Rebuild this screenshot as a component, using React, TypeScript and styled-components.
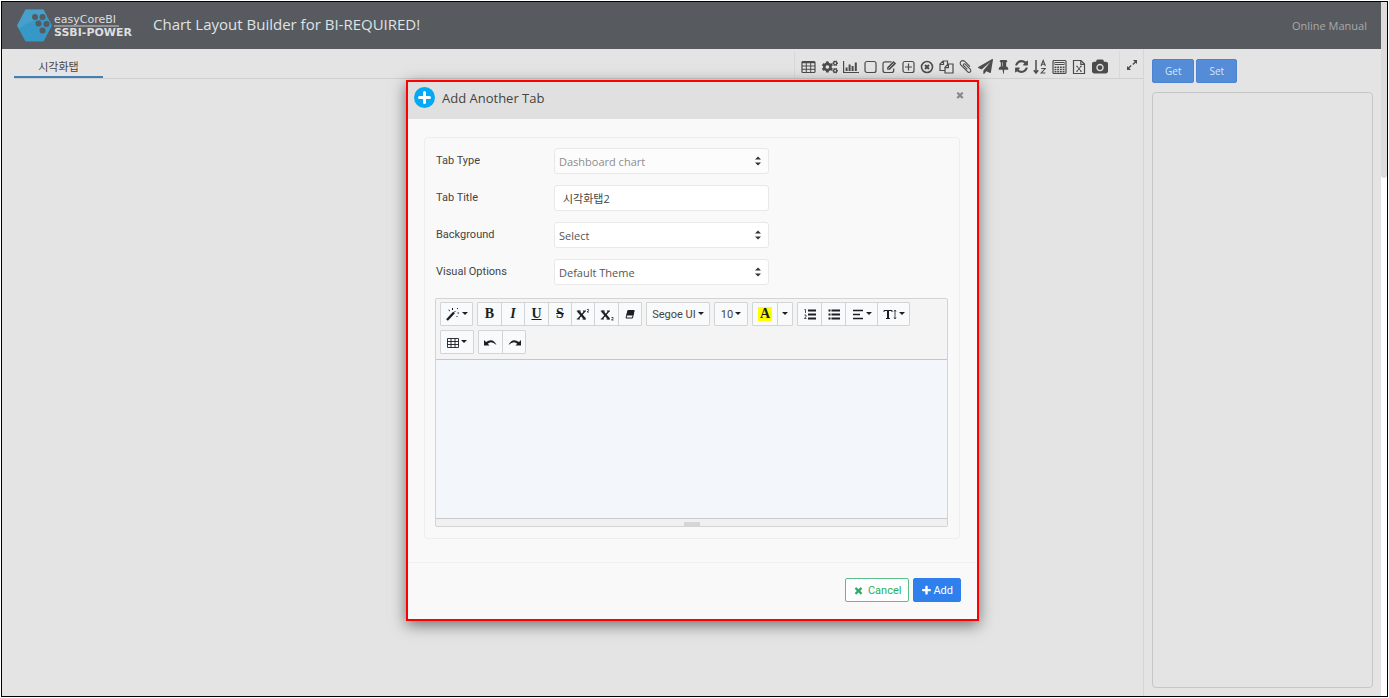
import React from "react";
import styled, { createGlobalStyle } from "styled-components";
import { FaCogs } from "react-icons/fa";

const GlobalStyle = createGlobalStyle`
  *, *::before, *::after { box-sizing: border-box; }
  body {
    margin: 0;
    background: #fff;
    color: #444;
    font-family: "Open Sans", "Noto Sans CJK KR", sans-serif;
    font-size: 11px;
  }
  button, input, select { font: inherit; color: inherit; }
  button { cursor: pointer; }
`;

const Frame = styled.div`
  display: flex;
  position: relative;
  height: calc(100vh - 2px);
  margin: 1px;
  margin-bottom: 0;
  border: 1px solid #000;
`;

const Page = styled.div`
  position: relative;
  flex: 1;
  display: flex;
  flex-direction: column;
  background: #e4e4e4;
`;

const ScrollTrack = styled.div`
  width: 6px;
  background: #fff;
`;

const ScrollThumb = styled.div`
  height: 176px;
  border-radius: 0 0 3px 3px;
  background: #dcdcdc;
`;

const Header = styled.header`
  display: flex;
  align-items: center;
  height: 47px;
  padding: 0 14px;
  background: #575a5e;
`;

const Brand = styled.a`
  display: flex;
  align-items: center;
  gap: 1px;
  width: 137px;
  color: #dedede;
  text-decoration: none;
`;

const BrandText = styled.span`
  display: flex;
  flex-direction: column;
  align-items: flex-start;
  font-family: "DejaVu Sans", sans-serif;
  font-size: 11px;
  line-height: 11px;
  white-space: nowrap;
`;

const BrandTop = styled.span`
  padding-right: 3px;
  border-bottom: 2px solid #919396;
`;

const BrandBottom = styled.span`
  font-weight: 700;
`;

const AppTitle = styled.h1`
  flex: 1;
  margin: 0;
  padding-bottom: 4px;
  color: #dfe3e6;
  font-size: 15px;
  font-weight: 400;
  line-height: 20px;
`;

const ManualLink = styled.a`
  color: #a9a9aa;
  line-height: 16px;
  text-decoration: none;
`;

const Main = styled.div`
  flex: 1;
  display: flex;
`;

const Workspace = styled.main`
  flex: 1;
  border-right: 1px solid #d6d6d6;
`;

const TabBar = styled.div`
  display: flex;
  justify-content: space-between;
  height: 30px;
  margin-left: 12px;
  border-bottom: 1px solid #cfcfcf;
`;

const TabButton = styled.button`
  width: 89px;
  height: 29px;
  padding: 8px 0 0;
  border: 0;
  border-bottom: 2px solid #4380b4;
  background: none;
  line-height: 16px;
`;

const Tools = styled.div`
  display: flex;
  align-items: center;
  gap: 5px;
  margin-top: 2px;
  padding-left: 6px;
  padding-top: 4px;
  border-left: 1px solid #d9d9d9;
  color: #4c4c4c;
`;

const ToolButton = styled.button<{ $w: number }>`
  display: flex;
  justify-content: center;
  width: ${(p) => p.$w}px;
  padding: 0;
  border: 0;
  background: none;
  svg { flex: none; display: block; }
`;

const ExpandBox = styled.div`
  display: flex;
  align-items: center;
  align-self: stretch;
  margin: -4px 0 0 6px;
  padding: 0 5px 0 6px;
  border-left: 1px solid #d9d9d9;
`;

const Side = styled.aside`
  display: flex;
  flex-direction: column;
  gap: 9px;
  width: 237px;
  padding: 10px 8px 8px;
`;

const SideActions = styled.div`
  display: flex;
  gap: 2px;
`;

const SideButton = styled.button`
  height: 24px;
  padding: 0 12px;
  border: 1px solid #4b84cf;
  border-radius: 2px;
  background: #548cd8;
  color: #d8e6f5;
  font-size: 10px;
`;

const Output = styled.div`
  flex: 1;
  border: 1px solid #c6c6c6;
  border-radius: 4px;
`;

const Overlay = styled.div`
  position: absolute;
  inset: 0;
  display: flex;
  justify-content: center;
  align-items: flex-start;
  padding-top: 78px;
`;

const Dialog = styled.section`
  width: 573px;
  margin-left: 2px;
  border: 2px solid #f00;
  background: #f9f9f9;
  box-shadow: 0 4px 14px rgba(0, 0, 0, 0.5);
`;

const DialogHeader = styled.header`
  display: flex;
  align-items: center;
  gap: 7px;
  height: 37px;
  padding: 0 12px 6px 6px;
  background: #e0e0e0;
`;

const DialogTitle = styled.h2`
  flex: 1;
  margin: 0;
  font-size: 13px;
  font-weight: 400;
  line-height: 20px;
`;

const CloseButton = styled.button`
  display: flex;
  padding: 0 0 6px;
  border: 0;
  background: none;
  color: #888;
`;

const Panel = styled.div`
  margin: 18px 17px 0 16px;
  padding: 10px 11px 11px 10px;
  border: 1px solid #ededed;
  border-radius: 4px;
`;

const Fields = styled.div`
  display: flex;
  flex-direction: column;
  gap: 11px;
  padding-left: 1px;
`;

const FieldRow = styled.div`
  display: grid;
  grid-template-columns: 118px 215px;
  align-items: center;
`;

const FieldLabel = styled.label`
  padding-bottom: 1px;
  font-family: Roboto, "Liberation Sans", sans-serif;
  font-size: 11px;
  line-height: 14px;
`;

const SelectWrap = styled.div`
  position: relative;
`;

const FieldSelect = styled.select`
  display: block;
  width: 100%;
  height: 26px;
  padding: 0 4px;
  appearance: none;
  border: 1px solid #e8e8e8;
  border-radius: 3px;
  background: #fff;
  color: #555;
  &:disabled { background: #fcfcfc; color: #8d8d8d; opacity: 1; }
`;

const SelectArrows = styled.svg`
  position: absolute;
  right: 8px;
  top: 8px;
  pointer-events: none;
`;

const FieldInput = styled.input`
  width: 100%;
  height: 26px;
  padding: 0 8px;
  border: 1px solid #e8e8e8;
  border-radius: 3px;
  background: #fff;
`;

const Editor = styled.div`
  margin-top: 13px;
  border: 1px solid #d3d3d3;
  border-radius: 2px;
`;

const EditorTools = styled.div`
  display: flex;
  flex-wrap: wrap;
  gap: 4px;
  padding: 3px 4px 5px;
  background: #f4f4f4;
  border-bottom: 1px solid #c6c6c6;
`;

const Group = styled.div`
  display: flex;
  height: 24px;
  border: 1px solid #d2d4d6;
  border-radius: 1px;
  background: #f8fafc;
`;

const EditButton = styled.button<{ $w: number }>`
  display: flex;
  align-items: center;
  justify-content: center;
  gap: 2px;
  width: ${(p) => p.$w}px;
  padding: 0;
  border: 0;
  background: none;
  color: #1c1f22;
  & + & { border-left: 1px solid #d2d4d6; }
`;

const FontText = styled.span`
  color: #444;
  font-family: Roboto, sans-serif;
  font-size: 11px;
`;

const Glyph = styled.span<{ $kind?: "italic" | "underline" | "strike" | "mark" }>`
  padding: 0 2px;
  font-family: "Liberation Serif", serif;
  font-size: 14px;
  font-weight: 700;
  line-height: 14px;
  font-style: ${(p) => (p.$kind === "italic" ? "italic" : "normal")};
  text-decoration: ${(p) =>
    p.$kind === "underline" ? "underline" : p.$kind === "strike" ? "line-through" : "none"};
  background: ${(p) => (p.$kind === "mark" ? "#ff0" : "none")};
`;

const EditArea = styled.div`
  height: 158px;
  background: #f3f7fc;
  outline: none;
`;

const StatusBar = styled.div`
  display: flex;
  justify-content: center;
  align-items: flex-end;
  height: 8px;
  border-top: 1px solid #c9c9c9;
  background: #f0f0f0;
`;

const Grip = styled.div`
  width: 16px;
  height: 4px;
  background: #d6d6d6;
`;

const DialogFooter = styled.footer`
  display: flex;
  justify-content: flex-end;
  gap: 4px;
  margin-top: 23px;
  padding: 15px 16px 17px;
  border-top: 1px solid #f0f0f0;
`;

const FooterButton = styled.button<{ $primary?: boolean }>`
  display: flex;
  align-items: center;
  justify-content: center;
  gap: ${(p) => (p.$primary ? 1 : 4)}px;
  height: 24px;
  padding: 0 7px;
  border: 1px solid ${(p) => (p.$primary ? "#2f80ed" : "#5cbf85")};
  border-radius: 2px;
  background: ${(p) => (p.$primary ? "#2f80ed" : "#fff")};
  color: ${(p) => (p.$primary ? "#fff" : "#27ae60")};
  font-family: Roboto, "Liberation Sans", sans-serif;
  font-size: 11px;
`;

const PLUS =
  "M1600 736v192q0 40-28 68t-68 28h-416v416q0 40-28 68t-68 28h-192q-40 0-68-28t-28-68v-416h-416q-40 0-68-28t-28-68v-192q0-40 28-68t68-28h416v-416q0-40 28-68t68-28h192q40 0 68 28t28 68v416h416q40 0 68 28t28 68z";
const TIMES =
  "M1490 1322q0 40-28 68l-136 136q-28 28-68 28t-68-28l-294-294-294 294q-28 28-68 28t-68-28l-136-136q-28-28-28-68t28-68l294-294-294-294q-28-28-28-68t28-68l136-136q28-28 68-28t68 28l294 294 294-294q28-28 68-28t68 28l136 136q28 28 28 68t-28 68l-294 294 294 294q28 28 28 68z";
const CLIP =
  "M1596 1385q0 117-79 196t-196 79q-135 0-235-100l-777-776q-113-115-113-271 0-159 110-270t269-111q158 0 273 113l605 606q10 10 10 22 0 16-30.5 46.5t-46.5 30.5q-13 0-23-10l-606-607q-79-77-181-77-106 0-179 75t-73 181q0 105 76 181l776 777q63 63 145 63 64 0 106-42t42-106q0-82-63-145l-581-581q-26-24-60-24-29 0-48 19t-19 48q0 32 25 59l410 410q10 10 10 22 0 16-31 47t-47 31q-12 0-22-10l-410-410q-63-61-63-149 0-82 57-139t139-57q88 0 149 63l581 581q100 98 100 235z";
const PLANE =
  "M1764 11q33 24 27 64l-256 1536q-5 29-32 45-14 8-31 8-11 0-24-5l-453-185-242 295q-18 23-49 23-13 0-22-4-19-7-30.5-23.5t-11.5-36.5v-349l864-1059-1069 925-395-162q-37-14-40-55-2-40 32-59l1664-960q15-9 32-9 20 0 36 11z";
const PIN =
  "M800 864v-448q0-14-9-23t-23-9-23 9-9 23v448q0 14 9 23t23 9 23-9 9-23zm672 352q0 26-19 45t-45 19h-429l-51 483q-2 12-10.5 20.5t-20.5 8.5h-1q-27 0-32-27l-76-485h-404q-26 0-45-19t-19-45q0-123 78.5-221.5t177.5-98.5v-512q-52 0-90-38t-38-90 38-90 90-38h640q52 0 90 38t38 90-38 90-90 38v512q99 0 177.5 98.5t78.5 221.5z";
const REFRESH =
  "M1639 1056q0 5-1 7-64 268-268 434.5t-478 166.5q-146 0-282.5-55t-243.5-157l-129 129q-19 19-45 19t-45-19-19-45v-448q0-26 19-45t45-19h448q26 0 45 19t19 45-19 45l-137 137q71 66 161 102t187 36q134 0 250-65t186-179q11-17 53-117 8-23 30-23h192q13 0 22.5 9.5t9.5 22.5zm25-800v448q0 26-19 45t-45 19h-448q-26 0-45-19t-19-45 19-45l138-138q-148-137-349-137-134 0-250 65t-186 179q-11 17-53 117-8 23-30 23h-199q-13 0-22.5-9.5t-9.5-22.5v-7q65-268 270-434.5t480-166.5q146 0 284 55.5t245 156.5l130-129q19-19 45-19t45 19 19 45z";
const CAMERA =
  "M896 672q119 0 203.5 84.5t84.5 203.5-84.5 203.5-203.5 84.5-203.5-84.5-84.5-203.5 84.5-203.5 203.5-84.5zm704-416q106 0 181 75t75 181v896q0 106-75 181t-181 75h-1408q-106 0-181-75t-75-181v-896q0-106 75-181t181-75h224l51-136q19-49 69.5-84.5t103.5-35.5h512q53 0 103.5 35.5t69.5 84.5l51 136h224zm-704 1152q185 0 316.5-131.5t131.5-316.5-131.5-316.5-316.5-131.5-316.5 131.5-131.5 316.5 131.5 316.5 316.5 131.5z";

function Solid({ d, size, box = "0 0 1792 1792" }: { d: string; size: number; box?: string }) {
  return (
    <svg width={size} height={size} viewBox={box} fill="currentColor" aria-hidden="true">
      <path d={d} />
    </svg>
  );
}

function Line({ children, w = 16 }: { children: React.ReactNode; w?: number }) {
  return (
    <svg
      width={w}
      height={16}
      viewBox={`0 0 ${w} 16`}
      fill="none"
      stroke="currentColor"
      strokeWidth={1.2}
      aria-hidden="true"
    >
      {children}
    </svg>
  );
}

function Caret() {
  return (
    <svg width="6" height="6" viewBox="0 0 6 6" fill="currentColor" aria-hidden="true">
      <path d="M0 1h6L3 4z" />
    </svg>
  );
}

const tools: { label: string; w: number; icon: React.ReactNode }[] = [
  {
    label: "Table",
    w: 15,
    icon: (
      <Line w={15}>
        <rect x="1" y="2.5" width="13" height="11" rx="1" />
        <path d="M1 3.500h13" strokeWidth="1.500" />
        <path d="M1 7h13M1 10.300h13M5.300 3v10.500M9.700 3v10.500" strokeWidth="1" />
      </Line>
    ),
  },
  { label: "Settings", w: 17, icon: <FaCogs size={16} /> },
  {
    label: "Chart",
    w: 16,
    icon: (
      <Line w={16}>
        <path d="M.6 2v11.5H16" />
        <path d="M3.6 8.5V12M6.6 5.5V12M9.6 7V12M12.8 3.5V12" strokeWidth="2" />
      </Line>
    ),
  },
  {
    label: "Shape",
    w: 13,
    icon: (
      <Line w={13}>
        <rect x="1" y="2.5" width="11" height="11" rx="2" />
      </Line>
    ),
  },
  {
    label: "Edit",
    w: 15,
    icon: (
      <Line w={15}>
        <path d="M9.5 2.8H3a2 2 0 0 0-2 2v6.7a2 2 0 0 0 2 2h6.7a2 2 0 0 0 2-2V9.5" />
        <path d="M5.2 10.8V8.2l6.2-6.2 2.8 2.6-6.3 6.2z" fill="currentColor" stroke="none" />
        <path d="M6.3 9.7 11.8 4.2" stroke="#e4e4e4" strokeWidth=".7" />
      </Line>
    ),
  },
  {
    label: "Add panel",
    w: 13,
    icon: (
      <Line w={13}>
        <rect x="1" y="2.5" width="11" height="11" rx="2" />
        <path d="M6.5 4.5v7M3 8h7" />
      </Line>
    ),
  },
  {
    label: "Remove",
    w: 14,
    icon: (
      <Line w={14}>
        <circle cx="7" cy="8" r="5.5" strokeWidth="1.6" />
        <path d="m5 6 4 4M9 6l-4 4" strokeWidth="2" />
      </Line>
    ),
  },
  {
    label: "Copy",
    w: 15,
    icon: (
      <Line w={15}>
        <path d="M6 11.5H1V5l3-3h4.5v3M1 5.5h3.5V2" />
        <path d="M6 8.2 9 5h5v9H6zM6 8.6h3.4V5" />
      </Line>
    ),
  },
  { label: "Attach", w: 13, icon: <Solid d={CLIP} size={15} box="0 0 1792 1792" /> },
  { label: "Send", w: 16, icon: <Solid d={PLANE} size={15} /> },
  { label: "Pin", w: 11, icon: <Solid d={PIN} size={15} /> },
  { label: "Refresh", w: 14, icon: <Solid d={REFRESH} size={15} /> },
  {
    label: "Sort",
    w: 14,
    icon: (
      <Line w={14}>
        <path d="M3 1v12M.8 11.300 3 14l2.200-2.700" strokeWidth="1.500" />
        <path d="M8 7l2.200-5.500L12.400 7M8.800 5.200h2.800M8.200 9.500h4L8.200 14h4.200" strokeWidth="1.100" />
      </Line>
    ),
  },
  {
    label: "Calculator",
    w: 15,
    icon: (
      <Line w={15}>
        <rect x="1" y="1.500" width="13" height="13" rx="1" />
        <rect x="3" y="3.500" width="9" height="2" strokeWidth="1" />
        <path d="M2.500 8.200h10M2.500 10.500h10M2.500 12.800h10" strokeWidth="1.500" strokeDasharray="1.900 .8" />
      </Line>
    ),
  },
  {
    label: "Export to spreadsheet",
    w: 14,
    icon: (
      <Line w={14}>
        <path d="M1.500 1.500H9L12.500 5v9.500h-11zM8.800 1.500v3.800h3.700" />
        <path d="m5 7.300 4 4.900M9 7.300l-4 4.900M4.200 7.300h1.600M8 7.300h1.800M4.200 12.200h1.600M8 12.200h1.800" strokeWidth="1" />
      </Line>
    ),
  },
  { label: "Capture", w: 17, icon: <Solid d={CAMERA} size={16} box="-64 -64 1920 1920" /> },
];

function Logo() {
  return (
    <svg width="37" height="33" viewBox="0 0 37 33" aria-hidden="true">
      <path d="M9.500 .5h18L36 16.500l-8.500 16h-18L1 16.500z" fill="#3598c6" />
      <path d="M9.500 .5h18l3.500 7Q12 12 3 20L1 16.500z" fill="#53a8cf" opacity=".55" />
      <g fill="#575a5e">
        <circle cx="19" cy="8" r="3" />
        <circle cx="26.500" cy="8" r="3" />
        <circle cx="22.500" cy="14.500" r="3" />
        <circle cx="30.500" cy="15" r="3" />
        <circle cx="26.500" cy="21.500" r="3" />
      </g>
    </svg>
  );
}

function Field({
  id,
  label,
  children,
}: {
  id: string;
  label: string;
  children: React.ReactNode;
}) {
  return (
    <FieldRow>
      <FieldLabel htmlFor={id}>{label}</FieldLabel>
      {children}
    </FieldRow>
  );
}

function Picker({ id, value, disabled }: { id: string; value: string; disabled?: boolean }) {
  return (
    <SelectWrap>
      <FieldSelect id={id} disabled={disabled}>
        <option>{value}</option>
      </FieldSelect>
      <SelectArrows width="6" height="10" viewBox="0 0 6 10" fill="#333">
        <path d="M0 3.500 3 .5l3 3zM0 6.500h6l-3 3z" />
      </SelectArrows>
    </SelectWrap>
  );
}

function EditorToolbar() {
  return (
    <EditorTools>
      <Group>
        <EditButton $w={31} aria-label="Style">
          <svg width="14" height="14" viewBox="0 0 14 14" stroke="currentColor" fill="none">
            <path d="M1 13 8 5.500" strokeWidth="2.400" />
            <path d="M8 5.500 9.500 4M6.500 1v2M2.500 3l1.500 1M11 2l1-1M11.500 6H13M10.500 9l1 1" strokeWidth="1" />
          </svg>
          <Caret />
        </EditButton>
      </Group>
      <Group>
        <EditButton $w={23} aria-label="Bold"><Glyph>B</Glyph></EditButton>
        <EditButton $w={23} aria-label="Italic"><Glyph $kind="italic">I</Glyph></EditButton>
        <EditButton $w={24} aria-label="Underline"><Glyph $kind="underline">U</Glyph></EditButton>
        <EditButton $w={23} aria-label="Strikethrough"><Glyph $kind="strike">S</Glyph></EditButton>
        <EditButton $w={23} aria-label="Superscript">
          <svg width="14" height="14" viewBox="0 0 14 14" stroke="currentColor" fill="none">
            <path d="m2 4 7 8" strokeWidth="2.200" />
            <path d="M9 4l-7 8M.8 4h4M7 4h3M.8 12h3M6.500 12H10" strokeWidth="1.200" />
            <path d="M11 2.500h1.500v1L11 5h2" strokeWidth=".8" />
          </svg>
        </EditButton>
        <EditButton $w={24} aria-label="Subscript">
          <svg width="14" height="14" viewBox="0 0 14 14" stroke="currentColor" fill="none">
            <path d="m2 4 7 8" strokeWidth="2.200" />
            <path d="M9 4l-7 8M.8 4h4M7 4h3M.8 12h3M6.500 12H10" strokeWidth="1.200" />
            <path d="M11.500 10.500H13v1L11.500 13h2" strokeWidth=".8" />
          </svg>
        </EditButton>
        <EditButton $w={23} aria-label="Clear formatting">
          <svg width="12" height="12" viewBox="0 0 12 12" stroke="currentColor" fill="none">
            <path d="M4 2.500h6L8.500 10H2z" />
            <path d="M4 2.500h6L9 7H3z" fill="currentColor" />
          </svg>
        </EditButton>
      </Group>
      <Group>
        <EditButton $w={62} aria-label="Font family"><FontText>Segoe UI</FontText><Caret /></EditButton>
      </Group>
      <Group>
        <EditButton $w={32} aria-label="Font size"><FontText>10</FontText><Caret /></EditButton>
      </Group>
      <Group>
        <EditButton $w={24} aria-label="Highlight colour"><Glyph $kind="mark">A</Glyph></EditButton>
        <EditButton $w={15} aria-label="More colours"><Caret /></EditButton>
      </Group>
      <Group>
        <EditButton $w={23} aria-label="Ordered list">
          <svg width="12" height="12" viewBox="0 0 12 12" stroke="currentColor" fill="none">
            <path d="M4 2.500h8M4 6.500h8M4 10.500h8" strokeWidth="1.800" />
            <path d="M.5 1.500h1V5M.5 7h1.500v1.500L.5 10.500h2" strokeWidth=".8" />
          </svg>
        </EditButton>
        <EditButton $w={24} aria-label="Unordered list">
          <svg width="12" height="12" viewBox="0 0 12 12" stroke="currentColor" fill="none">
            <path d="M3.500 2.500H12M3.500 6.500H12M3.500 10.500H12M.5 2.500h2M.5 6.500h2M.5 10.500h2" strokeWidth="1.800" />
          </svg>
        </EditButton>
        <EditButton $w={32} aria-label="Paragraph">
          <svg width="12" height="12" viewBox="0 0 12 12" stroke="currentColor" fill="none">
            <path d="M1 2.500h10M1 6.500h7M1 10.500h10" strokeWidth="1.700" />
          </svg>
          <Caret />
        </EditButton>
        <EditButton $w={32} aria-label="Line height">
          <svg width="14" height="12" viewBox="0 0 14 12" stroke="currentColor" fill="none">
            <path d="M1 4V2.500h8V4M3 10.500h4" />
            <path d="M5 2.500v8" strokeWidth="2" />
            <path d="M12 2.500v8M11 3.500l1-1.500 1 1.500M11 9.500l1 1.500 1-1.500" strokeWidth=".8" />
          </svg>
          <Caret />
        </EditButton>
      </Group>
      <Group>
        <EditButton $w={32} aria-label="Insert table">
          <svg width="12" height="12" viewBox="0 0 12 12" stroke="currentColor" fill="none">
            <path d="M.5 2.500h11v9H.5zM.5 5.500h11M.5 8.500h11M4 2.500v9M8 2.500v9" strokeWidth=".9" />
          </svg>
          <Caret />
        </EditButton>
      </Group>
      <Group>
        <EditButton $w={23} aria-label="Undo">
          <svg width="13" height="10" viewBox="0 0 13 10" fill="currentColor">
            <path d="M0 3v5.500h5.500L3.800 6.800Q7 3 12.500 8 9 .5 2 5z" />
          </svg>
        </EditButton>
        <EditButton $w={23} aria-label="Redo">
          <svg width="13" height="10" viewBox="0 0 13 10" fill="currentColor">
            <path d="M13 3v5.500H7.500l1.700-1.700Q6 3 .5 8 4 .5 11 5z" />
          </svg>
        </EditButton>
      </Group>
    </EditorTools>
  );
}

export default function App() {
  return (
    <>
      <GlobalStyle />
      <Frame>
        <Page>
          <Header>
            <Brand href="#">
              <Logo />
              <BrandText>
                <BrandTop>easyCoreBI</BrandTop>
                <BrandBottom>SSBI-POWER</BrandBottom>
              </BrandText>
            </Brand>
            <AppTitle>Chart Layout Builder for BI-REQUIRED!</AppTitle>
            <ManualLink href="#">Online Manual</ManualLink>
          </Header>
          <Main>
            <Workspace>
              <TabBar>
                <TabButton>시각화탭</TabButton>
                <Tools>
                  {tools.map((t) => (
                    <ToolButton key={t.label} $w={t.w} aria-label={t.label}>
                      {t.icon}
                    </ToolButton>
                  ))}
                  <ExpandBox>
                    <ToolButton $w={12} aria-label="Expand">
                      <svg width="12" height="12" viewBox="0 0 12 12" fill="currentColor">
                        <path d="M7 1h4v4L9.700 3.700 7.300 6.100l-1-1 2.400-2.400zM5 11H1V7l1.300 1.300 2.400-2.400 1 1-2.400 2.400z" />
                      </svg>
                    </ToolButton>
                  </ExpandBox>
                </Tools>
              </TabBar>
            </Workspace>
            <Side>
              <SideActions>
                <SideButton>Get</SideButton>
                <SideButton>Set</SideButton>
              </SideActions>
              <Output />
            </Side>
          </Main>
          <Overlay>
            <Dialog role="dialog" aria-labelledby="dialog-title">
              <DialogHeader>
                <svg width="21" height="21" viewBox="0 0 21 21" aria-hidden="true">
                  <circle cx="10.500" cy="10.500" r="10.500" fill="#03a9f4" />
                  <path d="M10.500 5.500v10M5.500 10.500h10" stroke="#fff" strokeWidth="3" strokeLinecap="round" />
                </svg>
                <DialogTitle id="dialog-title">Add Another Tab</DialogTitle>
                <CloseButton aria-label="Close"><Solid d={TIMES} size={10} /></CloseButton>
              </DialogHeader>
              <Panel>
                <Fields>
                  <Field id="type" label="Tab Type"><Picker id="type" value="Dashboard chart" disabled /></Field>
                  <Field id="title" label="Tab Title"><FieldInput id="title" defaultValue="시각화탭2" /></Field>
                  <Field id="background" label="Background"><Picker id="background" value="Select" /></Field>
                  <Field id="options" label="Visual Options"><Picker id="options" value="Default Theme" /></Field>
                </Fields>
                <Editor>
                  <EditorToolbar />
                  <EditArea contentEditable suppressContentEditableWarning role="textbox" aria-label="Description" />
                  <StatusBar><Grip /></StatusBar>
                </Editor>
              </Panel>
              <DialogFooter>
                <FooterButton><Solid d={TIMES} size={11} />Cancel</FooterButton>
                <FooterButton $primary><Solid d={PLUS} size={11} />Add</FooterButton>
              </DialogFooter>
            </Dialog>
          </Overlay>
        </Page>
        <ScrollTrack><ScrollThumb /></ScrollTrack>
      </Frame>
    </>
  );
}
